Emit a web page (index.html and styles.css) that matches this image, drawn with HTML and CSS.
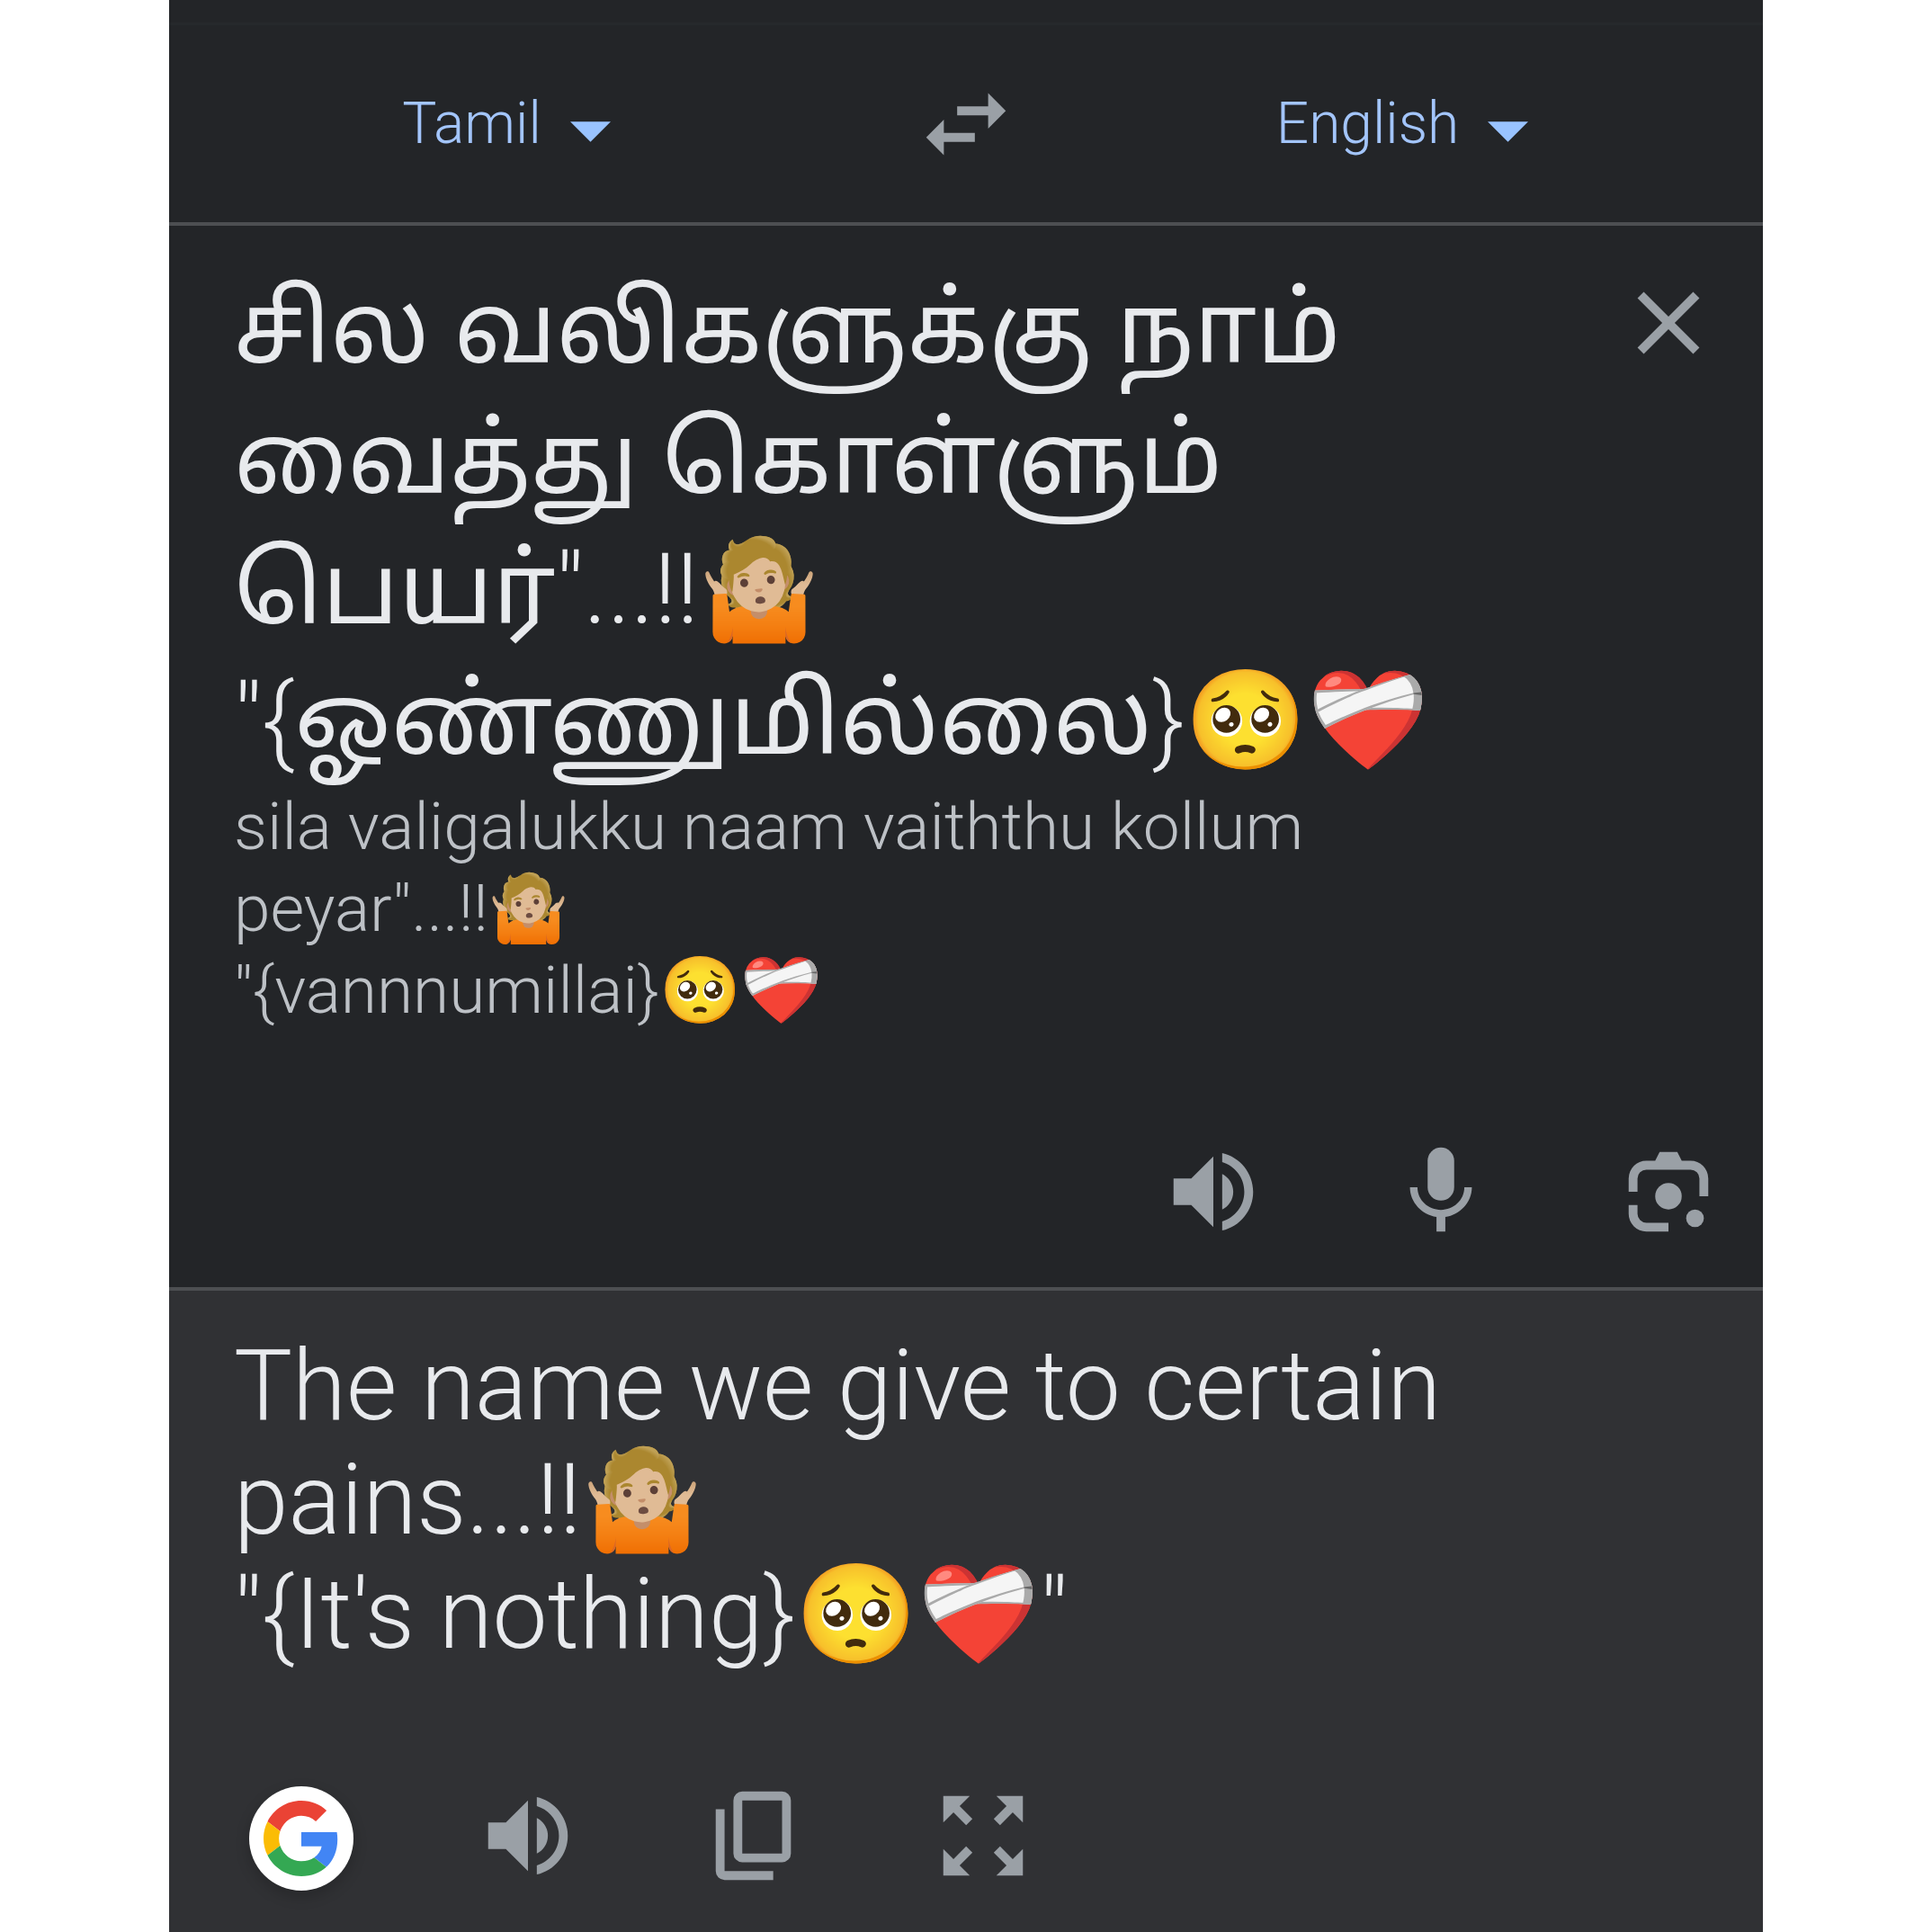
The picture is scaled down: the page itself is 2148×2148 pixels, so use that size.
FILE: index.html
```html
<!DOCTYPE html>
<html lang="en">
<head>
<meta charset="utf-8">
<meta name="viewport" content="width=device-width, initial-scale=1">
<title>Translate</title>
<link rel="stylesheet" href="styles.css">
</head>
<body>
<svg class="defs" aria-hidden="true">
  <symbol id="speaker" viewBox="0 0 24 24"><path d="M3 9v6h4l5 5V4L7 9H3zm13.500 3c0-1.770-1.020-3.290-2.500-4.030v8.050c1.480-.730 2.500-2.250 2.500-4.020zM14 3.230v2.060c2.890.860 5 3.540 5 6.710s-2.110 5.850-5 6.710v2.060c4.010-.910 7-4.490 7-8.770s-2.990-7.860-7-8.770z"/></symbol>
  <symbol id="arrow" viewBox="0 0 10 5"><path d="M0 0l5 5 5-5z"/></symbol>
</svg>
<main class="translator">
  <div class="top-edge"></div>
  <header class="languages">
    <label class="language">
      <select class="language-select" aria-label="Source language"><option>Tamil</option></select>
      <svg class="arrow" aria-hidden="true"><use href="#arrow"/></svg>
    </label>
    <button class="icon-button" aria-label="Swap languages">
      <svg class="icon" viewBox="0 0 24 24"><path d="M6.990 11L3 15l3.990 4v-3H14v-2H6.990v-3zM21 9l-3.990-4v3H10v2h7.010v3L21 9z"/></svg>
    </button>
    <label class="language language-target">
      <select class="language-select" aria-label="Target language"><option>English</option></select>
      <svg class="arrow" aria-hidden="true"><use href="#arrow"/></svg>
    </label>
  </header>

  <section class="source">
    <div class="source-body">
      <div class="source-text">
        <p class="original" lang="ta"><span class="tamil">சில வலிகளுக்கு நாம்<br>வைத்து கொள்ளும்<br>பெயர்</span>"...!!🤷🏼<br>"{<span class="tamil">ஓண்ணுமில்லை</span>}🥺❤️‍🩹</p>
        <p class="transliteration">sila valigalukku naam vaiththu kollum<br>peyar"...!!🤷🏼<br>"{vannnumillai}🥺❤️‍🩹</p>
      </div>
      <button class="icon-button clear" aria-label="Clear text">
        <svg class="icon" viewBox="0 0 24 24"><path d="M19 6.410L17.590 5 12 10.590 6.410 5 5 6.410 10.590 12 5 17.590 6.410 19 12 13.410 17.590 19 19 17.590 13.410 12z"/></svg>
      </button>
    </div>
    <div class="actions actions-end">
      <button class="icon-button" aria-label="Listen to source"><svg class="icon"><use href="#speaker"/></svg></button>
      <button class="icon-button" aria-label="Speak">
        <svg class="icon" viewBox="0 0 24 24"><rect x="9" y="2" width="6" height="12" rx="3"/><path d="M17.300 11c0 3-2.540 5.100-5.300 5.100S6.700 14 6.700 11H5c0 3.410 2.720 6.230 6 6.720V21h2v-3.280c3.280-.480 6-3.300 6-6.720z"/></svg>
      </button>
      <button class="icon-button" aria-label="Translate with camera">
        <svg class="icon" viewBox="0 0 24 24"><path d="M10 3h4l1 2h2a4 4 0 0 1 4 4v4h-2V9a2 2 0 0 0-2-2H7a2 2 0 0 0-2 2v3H3V9a4 4 0 0 1 4-4h2zM3 15h2v2a2 2 0 0 0 2 2h5v2H7a4 4 0 0 1-4-4z"/><circle cx="12" cy="13" r="3"/><circle cx="18" cy="18" r="2"/></svg>
      </button>
    </div>
  </section>

  <section class="target">
    <p class="translation">The name we give to certain<br>pains...!!🤷🏼<br>"{It's nothing}🥺❤️‍🩹"</p>
    <div class="actions">
      <button class="google" aria-label="Search with Google">
        <svg class="google-logo" viewBox="0 0 48 48"><path fill="#ea4335" d="M24 9.500c3.540 0 6.710 1.220 9.210 3.600l6.850-6.850C35.900 2.380 30.470 0 24 0 14.620 0 6.510 5.380 2.560 13.220l7.980 6.190C12.430 13.720 17.740 9.500 24 9.500z"/><path fill="#4285f4" d="M46.980 24.550c0-1.570-.150-3.090-.380-4.550H24v9.020h12.940c-.580 2.960-2.260 5.480-4.780 7.180l7.730 6c4.510-4.180 7.090-10.360 7.090-17.650z"/><path fill="#fbbc05" d="M10.530 28.590c-.480-1.450-.760-2.990-.760-4.590s.270-3.140.760-4.590l-7.980-6.190C.920 16.460 0 20.120 0 24s.920 7.540 2.560 10.780l7.970-6.190z"/><path fill="#34a853" d="M24 48c6.480 0 11.930-2.130 15.890-5.810l-7.730-6c-2.150 1.450-4.920 2.300-8.160 2.300-6.260 0-11.570-4.220-13.470-9.910l-7.980 6.190C6.510 42.620 14.620 48 24 48z"/></svg>
      </button>
      <button class="icon-button" aria-label="Listen to translation"><svg class="icon"><use href="#speaker"/></svg></button>
      <button class="icon-button" aria-label="Copy translation">
        <svg class="icon" viewBox="0 0 24 24"><path fill-rule="evenodd" d="M9 2h9a2 2 0 0 1 2 2v12a2 2 0 0 1-2 2H9a2 2 0 0 1-2-2V4a2 2 0 0 1 2-2zm0 2v12h9V4zM3 6h2v14h11v2H5a2 2 0 0 1-2-2z"/></svg>
      </button>
      <button class="icon-button" aria-label="Full screen">
        <svg class="icon" viewBox="0 0 24 24"><path d="M15 3l2.300 2.300-2.890 2.870 1.420 1.420L18.700 6.700 21 9V3zM3 9l2.300-2.300 2.870 2.890 1.420-1.420L6.700 5.300 9 3H3zm6 12l-2.300-2.300 2.890-2.870-1.420-1.420L5.300 17.300 3 15v6zm12-6l-2.300 2.300-2.870-2.890-1.420 1.420 2.890 2.870L15 21h6z"/></svg>
      </button>
    </div>
  </section>
</main>
</body>
</html>
```
FILE: styles.css
```css
* { box-sizing: border-box; }

body {
  margin: 0;
  background: #fff;
  font-family: Roboto, "Noto Sans Tamil", "Noto Sans", "Noto Color Emoji", sans-serif;
  font-weight: 300;
}

p { margin: 0; }

.defs { position: absolute; width: 0; height: 0; }

.translator {
  display: flex;
  flex-direction: column;
  min-height: 100vh;
  margin-inline: 188px;
  background: #232528;
  color: #e8eaed;
}

.top-edge {
  height: 28px;
  border-bottom: 3px solid #26292c;
}

.languages {
  display: grid;
  grid-template-columns: 1fr 272px 1fr;
  align-items: center;
  justify-items: center;
  padding: 51px 0 50px;
  border-bottom: 4px solid #4d4f52;
}

.language {
  display: flex;
  align-items: center;
  gap: 32px;
}

.language-target { margin-right: 52px; }

.language-select {
  appearance: none;
  field-sizing: content;
  padding: 0;
  border: 0;
  background: none;
  color: #a3c5fb;
  font: inherit;
  font-size: 64px;
  line-height: 76px;
}

.arrow {
  width: 45px;
  height: 23px;
  margin-top: 16px;
  fill: #99c3ff;
}

.icon-button {
  display: flex;
  align-items: center;
  justify-content: center;
  flex: none;
  width: 118px;
  height: 118px;
  padding: 0;
  border: 0;
  background: none;
}

.icon {
  width: 118px;
  height: 118px;
  fill: #9aa0a6;
}

.source {
  padding: 43px 46px 47px 72px;
  border-bottom: 4px solid #4d4f52;
}

.source-body {
  display: flex;
  justify-content: space-between;
  min-height: 972px;
}

.clear { margin-top: 6px; }

.original {
  font-size: 109px;
  line-height: 145px;
}

.tamil { font-weight: 400; }

.transliteration {
  color: #bdc1c6;
  font-size: 73px;
  line-height: 91px;
}

.actions {
  display: flex;
  align-items: center;
  gap: 135px;
}

.actions-end { justify-content: flex-end; }

.target {
  display: flex;
  flex: 1;
  flex-direction: column;
  justify-content: space-between;
  padding: 43px 90px 46px 72px;
  background: #303134;
}

.translation {
  font-size: 109px;
  line-height: 127px;
}

.target .actions { padding-left: 17px; }

.google {
  display: flex;
  align-items: center;
  justify-content: center;
  width: 116px;
  height: 116px;
  margin-top: 6px;
  padding: 0;
  border: 0;
  border-radius: 50%;
  background: #fff;
  box-shadow: 0 6px 16px rgb(0 0 0 / 20%);
}

.google-logo {
  width: 84px;
  height: 84px;
}
```
